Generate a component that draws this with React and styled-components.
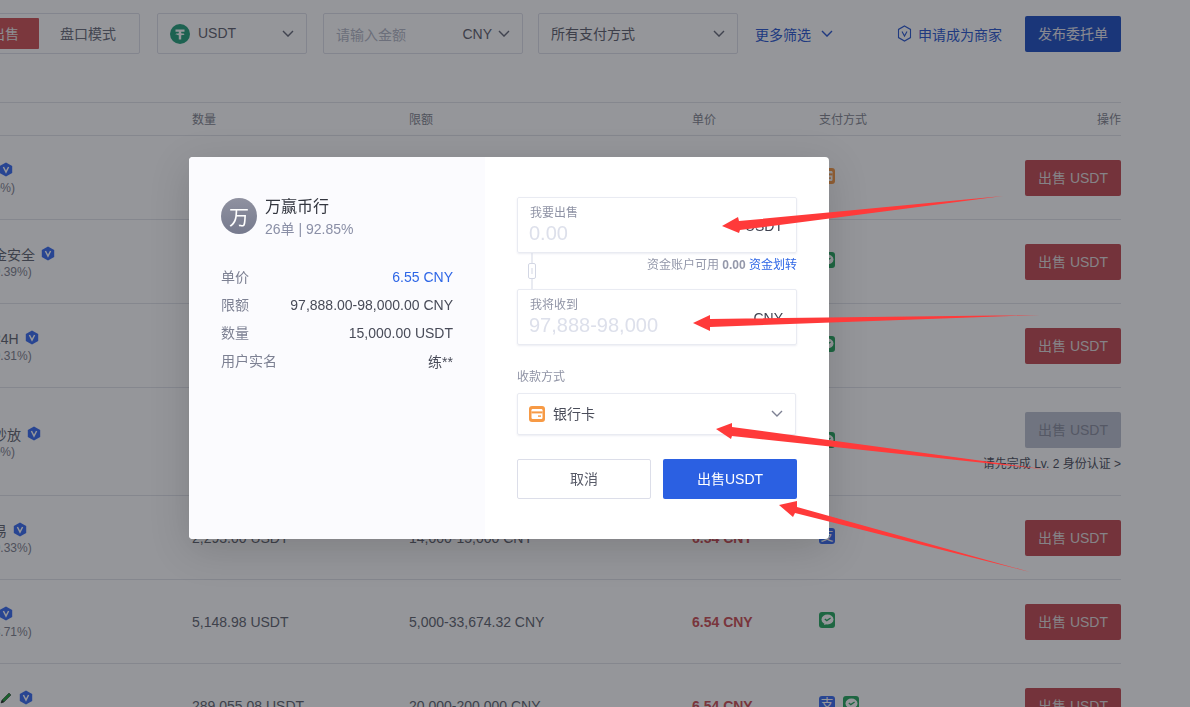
import React from 'react';
import styled, { createGlobalStyle } from 'styled-components';

const Global = createGlobalStyle`
  html, body { margin: 0; padding: 0; height: 100%; overflow: hidden; background: #fff; }
  body { font-family: "Liberation Sans", "Noto Sans CJK SC", sans-serif; color: #333644; }
  * { box-sizing: border-box; }
`;

const Page = styled.div`
  width: 1190px;
  height: 707px;
  margin-left: -69px;
  padding-top: 13px;
  overflow: hidden;
`;
const Toolbar = styled.div`
  display: flex;
  align-items: center;
  height: 41px;
  font-size: 14px;
`;
const Segment = styled.div`
  display: flex;
  width: 209px;
  height: 41px;
  padding: 4px 2px 4px 5px;
  border: 1px solid #dfe1ea;
  border-radius: 2px;
  margin-right: 17px;
`;
const SegmentTab = styled.div`
  display: flex;
  align-items: center;
  justify-content: center;
  width: ${p => p.$w}px;
  padding-bottom: 2px;
  border-radius: 1px;
  color: ${p => (p.$active ? '#eee' : '#6a6d7a')};
  background: ${p => (p.$active ? '#cf5257' : 'transparent')};
`;
const Field = styled.div`
  display: flex;
  align-items: center;
  width: ${p => p.$w}px;
  height: 41px;
  padding: 0 12px;
  margin-right: ${p => p.$mr}px;
  border: 1px solid #dfe1ea;
  border-radius: 2px;
  color: #5f626e;
`;
const Placeholder = styled.span`
  flex: 1;
  color: #b4b8c6;
`;
const FieldText = styled.span`
  flex: 1;
  margin-left: ${p => p.$ml || 0}px;
  padding-bottom: 1px;
`;
const CurrencyText = styled.span`
  margin-right: 6px;
`;
const FilterLink = styled.div`
  display: flex;
  align-items: center;
  gap: 10px;
  margin-left: 17px;
  color: #2a58d0;
  font-size: 14px;
`;
const MerchantLink = styled.div`
  display: flex;
  align-items: center;
  gap: 6px;
  margin-left: auto;
  color: #2a58d0;
  font-size: 14px;
`;
const Publish = styled.button`
  width: 96px;
  height: 36px;
  margin-left: 23px;
  padding: 0 0 2px;
  border: 0;
  border-radius: 2px;
  background: #2050c4;
  color: #e8e8ee;
  font: 14px "Liberation Sans", "Noto Sans CJK SC", sans-serif;
`;
const columns = '261px 217px 283px 127px 302px';
const HeaderRow = styled.div`
  display: grid;
  grid-template-columns: ${columns};
  align-items: center;
  height: 34px;
  margin-top: 48px;
  padding-bottom: 2px;
  border-top: 1px solid #e2e4ea;
  border-bottom: 1px solid #e2e4ea;
  font-size: 12px;
  color: #83868f;
`;
const HeadEnd = styled.div`
  display: flex;
  justify-content: space-between;
`;
const Row = styled.div`
  display: grid;
  grid-template-columns: ${columns};
  align-items: center;
  height: ${p => p.$h}px;
  border-bottom: 1px solid #e2e4ea;
  font-size: 14px;
  color: #62656f;
`;
const Merchant = styled.div`
  padding-left: 20px;
  white-space: nowrap;
`;
const NameLine = styled.div`
  display: flex;
  align-items: center;
  gap: 6px;
  height: 19px;
  padding-top: 1px;
  font-size: 14px;
`;
const Sub = styled.div`
  margin-top: 1px;
  font-size: 12px;
  line-height: 16px;
  color: #7f828e;
`;
const Price = styled.div`
  font-weight: 700;
  color: #cc4f55;
`;
const PayAndAction = styled.div`
  display: flex;
  align-items: center;
  justify-content: space-between;
`;
const Pays = styled.div`
  display: flex;
  gap: 8px;
  margin-bottom: 4px;
`;
const PayIcon = styled.span`
  display: flex;
  align-items: center;
  justify-content: center;
  width: 16px;
  height: 16px;
  border-radius: 3px;
  background: ${p => p.$bg};
  color: #fff;
  font-size: 13px;
  line-height: 1;
  overflow: hidden;
`;
const Actions = styled.div`
  display: flex;
  flex-direction: column;
  align-items: flex-end;
`;
const SellButton = styled.button`
  width: 96px;
  height: 36px;
  padding: 0 0 2px;
  border: 0;
  border-radius: 2px;
  background: ${p => (p.$disabled ? '#bcc1cf' : '#c44c52')};
  color: ${p => (p.$disabled ? '#8a8e9e' : '#e2dcdc')};
  font: 14px "Liberation Sans", "Noto Sans CJK SC", sans-serif;
`;
const Hint = styled.div`
  margin-top: 8px;
  font-size: 12px;
  line-height: 16px;
  color: #4c4f5c;
`;
const Overlay = styled.div`
  position: fixed;
  inset: 0;
  background: rgba(20, 22, 32, 0.45);
`;
const ModalShadow = styled.div`
  position: fixed;
  left: 189px;
  top: 157px;
  width: 640px;
  height: 382px;
  border-radius: 4px;
  box-shadow: 0 10px 40px rgba(0, 0, 0, 0.16);
`;
const Modal = styled.div`
  position: fixed;
  left: 189px;
  top: 157px;
  display: flex;
  width: 640px;
  height: 382px;
  border-radius: 4px;
  background: #fff;
  overflow: hidden;
`;
const LeftPane = styled.div`
  width: 296px;
  padding: 41px 32px 0;
  background: #fbfbfe;
`;
const Seller = styled.div`
  display: flex;
  gap: 8px;
  margin-bottom: 26px;
`;
const Avatar = styled.div`
  display: flex;
  align-items: center;
  justify-content: center;
  width: 36px;
  height: 36px;
  border-radius: 50%;
  background: linear-gradient(#8f91a0, #767a8e);
  color: #fff;
  font-size: 20px;
  font-family: "Liberation Serif", "Noto Sans CJK SC", serif;
`;
const SellerName = styled.div`
  font-size: 16px;
  line-height: 18px;
  color: #33363f;
`;
const SellerStats = styled.div`
  margin-top: 5px;
  font-size: 14px;
  line-height: 16px;
  color: #8a8fa6;
`;
const Info = styled.div`
  display: flex;
  justify-content: space-between;
  height: 28px;
  align-items: center;
  font-size: 14px;
  color: #7d8193;
`;
const InfoLabel = styled.span`
  margin-bottom: 3px;
`;
const InfoValue = styled.span`
  font-size: 14px;
  color: ${p => (p.$blue ? '#2e66e6' : '#484b58')};
`;
const RightPane = styled.div`
  flex: 1;
  padding: 40px 32px 0;
`;
const AmountBox = styled.div`
  display: flex;
  align-items: flex-end;
  justify-content: space-between;
  height: 56px;
  padding: 8px 13px 6px 12px;
  border: 1px solid #e9ebf2;
  border-radius: 2px;
  box-shadow: 0 1px 2px rgba(120, 130, 170, 0.14);
`;
const AmountLabel = styled.div`
  font-size: 12px;
  line-height: 14px;
  color: #8f93a5;
`;
const AmountValue = styled.div`
  margin-left: -1px;
  font-size: 20px;
  line-height: 26px;
  color: #dde0eb;
`;
const AmountUnit = styled.div`
  margin-bottom: 12px;
  font-size: 14px;
  color: #3f4250;
`;
const Between = styled.div`
  display: flex;
  justify-content: space-between;
  align-items: center;
  height: 36px;
  font-size: 12px;
  color: #9498aa;
`;
const LinkGlyph = styled.div`
  display: flex;
  margin-left: 11px;
  height: 36px;
`;
const Balance = styled.div`
  margin-top: -16px;
`;
const BalanceValue = styled.b`
  color: #9498aa;
`;
const BlueLink = styled.span`
  color: #2e66e6;
`;
const FieldLabel = styled.div`
  margin-top: 25px;
  margin-bottom: 8px;
  font-size: 12px;
  line-height: 15px;
  color: #8f93a5;
`;
const SelectBox = styled.div`
  display: flex;
  align-items: center;
  width: 279px;
  height: 42px;
  padding: 0 12px 0 11px;
  gap: 8px;
  border: 1px solid #e9ebf2;
  border-radius: 2px;
  box-shadow: 0 1px 2px rgba(120, 130, 170, 0.14);
  font-size: 14px;
  color: #4a4d5a;
`;
const SelectText = styled.span`
  flex: 1;
  margin-bottom: 3px;
`;
const ButtonRow = styled.div`
  display: flex;
  gap: 12px;
  margin-top: 24px;
`;
const CancelBtn = styled.button`
  width: 134px;
  height: 40px;
  padding: 0 0 3px;
  border: 1px solid #dcdee9;
  border-radius: 2px;
  background: #fff;
  color: #585b68;
  font: 14px "Liberation Sans", "Noto Sans CJK SC", sans-serif;
`;
const ConfirmBtn = styled.button`
  width: 134px;
  height: 40px;
  padding: 0 0 2px;
  border: 0;
  border-radius: 2px;
  background: #2b60e2;
  color: #fff;
  font: 14px "Liberation Sans", "Noto Sans CJK SC", sans-serif;
`;
const Arrows = styled.svg`
  position: fixed;
  inset: 0;
  width: 1190px;
  height: 707px;
  pointer-events: none;
`;

const Chevron = ({ color = '#666a78', w = 12 }) => (
  <svg width={w} height={w * 0.6} viewBox="0 0 12 7" fill="none">
    <path d="M1 1l5 5 5-5" stroke={color} strokeWidth="1.4" />
  </svg>
);
const Tether = () => (
  <svg width="20" height="20" viewBox="0 0 20 20">
    <circle cx="10" cy="10" r="10" fill="#26a17b" />
    <path d="M5.5 5.5h9v2.2h-3.3v1.5c1.9.1 3.3.5 3.3 1s-1.4.9-3.3 1v4.3H8.8v-4.3c-1.9-.1-3.3-.5-3.3-1s1.4-.9 3.3-1V7.7H5.5z" fill="#fff" />
  </svg>
);
const HexOutline = () => (
  <svg width="15" height="17" viewBox="0 0 15 17" fill="none">
    <path d="M7.5 1l6 3.4v8.2l-6 3.4-6-3.4V4.4z" stroke="#2a58d0" strokeWidth="1.1" />
    <path d="M5 6.5l2.5 4.5L10 6.5" stroke="#2a58d0" strokeWidth="1.1" />
  </svg>
);
const VBadge = () => (
  <svg width="14" height="15" viewBox="0 0 14 15">
    <path d="M7 .5l6.2 3.4v7.2L7 14.5.8 11.1V3.9z" fill="#3a6cf0" />
    <path d="M4.4 5l2.6 5 2.6-5" fill="none" stroke="#fff" strokeWidth="1.5" />
  </svg>
);
const Pencil = () => (
  <svg width="14" height="14" viewBox="0 0 14 14">
    <path d="M2 12l1-3 7-7 2 2-7 7z" fill="#1f9d3a" stroke="#222" strokeWidth=".5" />
    <path d="M2 12l1-3 2 2z" fill="#222" />
  </svg>
);
const CardGlyph = () => (
  <svg width="12" height="10" viewBox="0 0 12 10">
    <rect x=".5" y="0" width="11" height="10" rx="1.2" fill="#fff" />
    <rect x=".5" y="2.4" width="11" height="2" fill="#f79a45" />
    <rect x="7" y="6.4" width="3" height="1.4" fill="#f79a45" />
  </svg>
);
const WechatGlyph = () => (
  <svg width="13" height="12" viewBox="0 0 13 12">
    <ellipse cx="6.5" cy="5.5" rx="6" ry="5" fill="#fff" />
    <path d="M3 11l1-3 2 2z" fill="#fff" />
    <path d="M3.8 5l2 1.6L9.6 4" fill="none" stroke="#27a85f" strokeWidth="1.3" />
  </svg>
);
const ChainGlyph = () => (
  <svg width="8" height="36" viewBox="0 0 8 36" fill="none" stroke="#d3d7e4">
    <path d="M4 0v10M4 26v10" />
    <rect x=".5" y="10.5" width="7" height="15" rx="1.5" />
    <path d="M4 15v6" />
  </svg>
);

const Pay = ({ kind }) => {
  if (kind === 'card') return <PayIcon $bg="#f79a45"><CardGlyph /></PayIcon>;
  if (kind === 'wx') return <PayIcon $bg="#27a85f"><WechatGlyph /></PayIcon>;
  return <PayIcon $bg="#3a6cf0">支</PayIcon>;
};

const rows = [
  { h: 84, name: '币安商', sub: '88单(100%)', pays: ['card'] },
  { h: 84, name: '诚信资金安全', sub: '368单(99.39%)', pays: ['wx'] },
  { h: 84, name: '全天在24H', sub: '368单(99.31%)', pays: ['wx'] },
  { h: 108, name: '诚信商秒放', sub: '88单(100%)', pays: ['wx'], locked: true },
  { h: 84, name: '快捷交易', sub: '368单(99.33%)', qty: '2,293.00 USDT', limit: '14,000-15,000 CNY', price: '6.54 CNY', pays: ['ali'] },
  { h: 84, name: '优质商', sub: '368单(98.71%)', qty: '5,148.98 USDT', limit: '5,000-33,674.32 CNY', price: '6.54 CNY', pays: ['wx'] },
  { h: 84, name: '放心购', pencil: true, sub: '368单(99.00%)', qty: '289,055.08 USDT', limit: '20,000-200,000 CNY', price: '6.54 CNY', pays: ['ali', 'wx'] },
];

const arrows = [
  '1003,196 739,221 738,217 722,226 739,233 740,230',
  '1040,315 710,319 710,315 693,323 710,331 710,327',
  '1050,470 732,427 732,423 716,429 731,439 732,436',
  '1030,572 797,507 797,501 779,505 793,517 795,513',
];

const RowEnd = ({ r }) => (
  <PayAndAction>
    <Pays>{r.pays.map((k, i) => <Pay key={i} kind={k} />)}</Pays>
    <Actions>
      <SellButton $disabled={r.locked}>出售 USDT</SellButton>
      {r.locked && <Hint>请先完成 Lv. 2 身份认证 &gt;</Hint>}
    </Actions>
  </PayAndAction>
);

export default function App() {
  return (
    <>
      <Global />
      <Page>
        <Toolbar>
          <Segment>
            <SegmentTab $w={34} />
            <SegmentTab $w={68} $active>出售</SegmentTab>
            <SegmentTab $w={98}>盘口模式</SegmentTab>
          </Segment>
          <Field $w={150} $mr={16}>
            <Tether />
            <FieldText $ml={8}>USDT</FieldText>
            <Chevron />
          </Field>
          <Field $w={200} $mr={15}>
            <Placeholder>请输入金额</Placeholder>
            <CurrencyText>CNY</CurrencyText>
            <Chevron />
          </Field>
          <Field $w={200} $mr={0}>
            <FieldText>所有支付方式</FieldText>
            <Chevron />
          </Field>
          <FilterLink>更多筛选 <Chevron color="#2a58d0" /></FilterLink>
          <MerchantLink><HexOutline />申请成为商家</MerchantLink>
          <Publish>发布委托单</Publish>
        </Toolbar>
        <HeaderRow>
          <div />
          <div>数量</div>
          <div>限额</div>
          <div>单价</div>
          <HeadEnd>
            <span>支付方式</span>
            <span>操作</span>
          </HeadEnd>
        </HeaderRow>
        {rows.map((r, i) => (
          <Row key={i} $h={r.h}>
            <Merchant>
              <NameLine>
                <span>{r.name}</span>
                {r.pencil && <Pencil />}
                <VBadge />
              </NameLine>
              <Sub>{r.sub}</Sub>
            </Merchant>
            <div>{r.qty}</div>
            <div>{r.limit}</div>
            <Price>{r.price}</Price>
            <RowEnd r={r} />
          </Row>
        ))}
      </Page>
      <Overlay />
      <ModalShadow />
      <Modal>
        <LeftPane>
          <Seller>
            <Avatar>万</Avatar>
            <div>
              <SellerName>万赢币行</SellerName>
              <SellerStats>26单 | 92.85%</SellerStats>
            </div>
          </Seller>
          <Info><InfoLabel>单价</InfoLabel><InfoValue $blue>6.55 CNY</InfoValue></Info>
          <Info><InfoLabel>限额</InfoLabel><InfoValue>97,888.00-98,000.00 CNY</InfoValue></Info>
          <Info><InfoLabel>数量</InfoLabel><InfoValue>15,000.00 USDT</InfoValue></Info>
          <Info><InfoLabel>用户实名</InfoLabel><InfoValue>练**</InfoValue></Info>
        </LeftPane>
        <RightPane>
          <AmountBox>
            <div>
              <AmountLabel>我要出售</AmountLabel>
              <AmountValue>0.00</AmountValue>
            </div>
            <AmountUnit>USDT</AmountUnit>
          </AmountBox>
          <Between>
            <LinkGlyph><ChainGlyph /></LinkGlyph>
            <Balance>资金账户可用 <BalanceValue>0.00</BalanceValue> <BlueLink>资金划转</BlueLink></Balance>
          </Between>
          <AmountBox>
            <div>
              <AmountLabel>我将收到</AmountLabel>
              <AmountValue>97,888-98,000</AmountValue>
            </div>
            <AmountUnit>CNY</AmountUnit>
          </AmountBox>
          <FieldLabel>收款方式</FieldLabel>
          <SelectBox>
            <Pay kind="card" />
            <SelectText>银行卡</SelectText>
            <Chevron color="#7d8193" />
          </SelectBox>
          <ButtonRow>
            <CancelBtn>取消</CancelBtn>
            <ConfirmBtn>出售USDT</ConfirmBtn>
          </ButtonRow>
        </RightPane>
      </Modal>
      <Arrows viewBox="0 0 1190 707">
        {arrows.map(points => <polygon key={points} points={points} fill="#ff3a3a" />)}
      </Arrows>
    </>
  );
}
